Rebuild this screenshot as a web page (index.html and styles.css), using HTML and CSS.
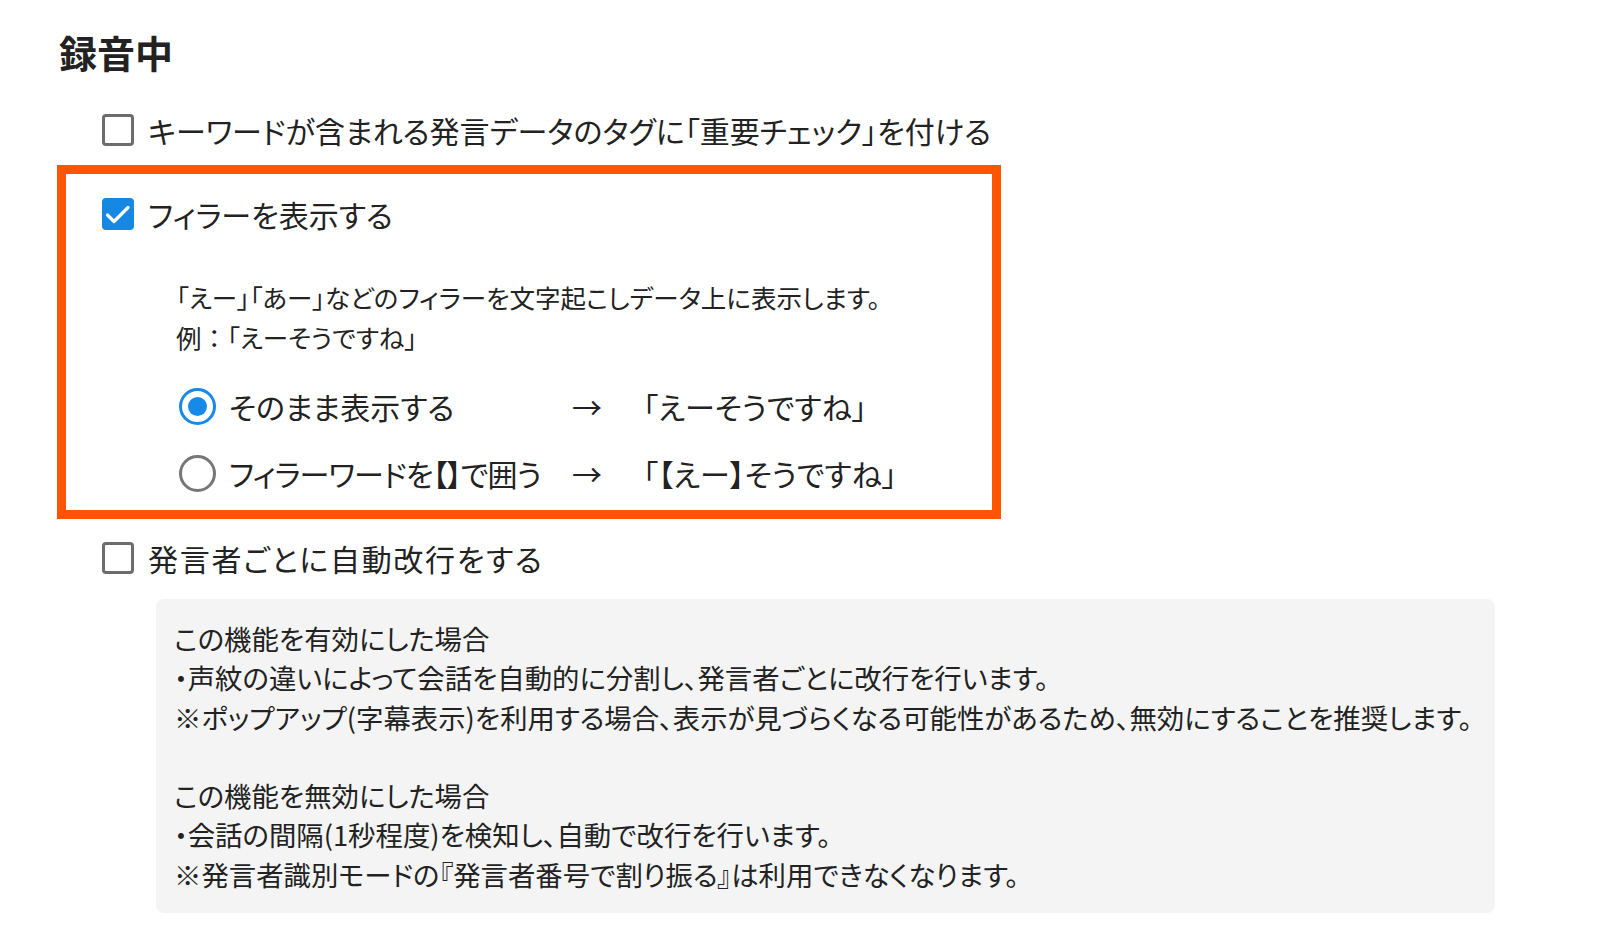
FILE: index.html
```html
<!DOCTYPE html>
<html lang="ja">
<head>
<meta charset="utf-8">
<title>録音中</title>
<link rel="stylesheet" href="styles.css">
</head>
<body>
<div class="page">
  <h1 class="heading">録音中</h1>

  <div class="option">
    <span class="checkbox"></span>
    <span class="option-label">キーワードが含まれる発言データのタグに「重要チェック」を付ける</span>
  </div>

  <div class="highlight">
    <div class="option option-inbox">
      <span class="checkbox checked">
        <svg viewBox="0 0 32 32" width="32" height="32"><path d="M5.5 17l6.5 6.5L26 9.5" fill="none" stroke="#fff" stroke-width="3.2" stroke-linecap="round" stroke-linejoin="round"/></svg>
      </span>
      <span class="option-label">フィラーを表示する</span>
    </div>
    <div class="desc">
      <p>「えー」「あー」などのフィラーを文字起こしデータ上に表示します。</p>
      <p>例<span class="full">：</span>「えーそうですね」</p>
    </div>
    <div class="radios">
      <span class="radio selected"></span>
      <span class="radio-label">そのまま表示する</span>
      <span class="arrow">→</span>
      <span class="result">「えーそうですね」</span>

      <span class="radio"></span>
      <span class="radio-label tight">フィラーワードを【】で囲う</span>
      <span class="arrow">→</span>
      <span class="result">「【えー】そうですね」</span>
    </div>
  </div>

  <div class="option option-last">
    <span class="checkbox"></span>
    <span class="option-label loose">発言者ごとに自動改行をする</span>
  </div>

  <div class="note">
    <p>この機能を有効にした場合</p>
    <p>・声紋の違いによって会話を自動的に分割し、発言者ごとに改行を行います。</p>
    <p>※ポップアップ(字幕表示)を利用する場合、表示が見づらくなる可能性があるため、無効にすることを推奨します。</p>
    <p class="blank">&nbsp;</p>
    <p>この機能を無効にした場合</p>
    <p>・会話の間隔(1秒程度)を検知し、自動で改行を行います。</p>
    <p>※発言者識別モードの『発言者番号で割り振る』は利用できなくなります。</p>
  </div>
</div>
</body>
</html>
```

FILE: styles.css
```css
* { box-sizing: border-box; }

html, body {
  margin: 0;
  padding: 0;
  background: #ffffff;
}

body {
  font-family: "Noto Sans CJK JP", "Noto Sans", sans-serif;
  font-feature-settings: "palt";
  color: #222222;
}

.page {
  padding: 30px 0 0 57px;
}

.heading {
  margin: 0 0 0 2px;
  font-size: 38px;
  line-height: 44px;
  font-weight: 700;
  color: #222;
}

.option {
  display: flex;
  align-items: center;
  height: 44px;
  margin-top: 34px;
  padding-left: 45px;
  gap: 14px;
}

.option-label {
  font-size: 30px;
  line-height: 44px;
  white-space: nowrap;
}

.option-label.loose {
  letter-spacing: 1.7px;
}

.checkbox {
  width: 32px;
  height: 32px;
  flex: 0 0 32px;
  border: 3.5px solid #6c6c6c;
  border-radius: 4px;
  display: flex;
  align-items: center;
  justify-content: center;
}

.checkbox.checked {
  background: #1688e4;
  border: none;
}

.checkbox svg {
  width: 32px;
  height: 32px;
  display: block;
}

.highlight {
  width: 944px;
  margin-top: 13px;
  border: 9px solid #ff5500;
  padding: 18px 0 12px 36px;
}

.option.option-inbox {
  margin-top: 0;
  padding-left: 0;
}

.desc {
  margin-top: 41px;
  padding-left: 74px;
}

.desc p {
  margin: 0;
  font-size: 25.5px;
  line-height: 40px;
  white-space: nowrap;
}

.desc .full {
  font-feature-settings: normal;
}

.radios {
  display: grid;
  grid-template-columns: 50px 343px 71px 1fr;
  grid-auto-rows: 50px;
  row-gap: 17px;
  align-items: center;
  margin-top: 24px;
  padding-left: 77px;
  font-size: 30px;
}

.radio {
  width: 37px;
  height: 37px;
  border: 3.5px solid #777777;
  border-radius: 50%;
  display: flex;
  align-items: center;
  justify-content: center;
}

.radio.selected {
  border-color: #168ae8;
}

.radio.selected::after {
  content: "";
  width: 19px;
  height: 19px;
  border-radius: 50%;
  background: #168ae8;
}

.radio-label, .arrow, .result {
  white-space: nowrap;
  line-height: 50px;
}

.radio-label.tight {
  letter-spacing: -0.9px;
}

.option.option-last {
  margin-top: 17px;
}

.note {
  margin: 19px 0 0 99px;
  width: 1339px;
  background: #f4f4f4;
  border-radius: 8px;
  padding: 20px 18px 19px;
}

.note p {
  margin: 0;
  font-size: 27.4px;
  line-height: 39.3px;
  white-space: nowrap;
}
```
